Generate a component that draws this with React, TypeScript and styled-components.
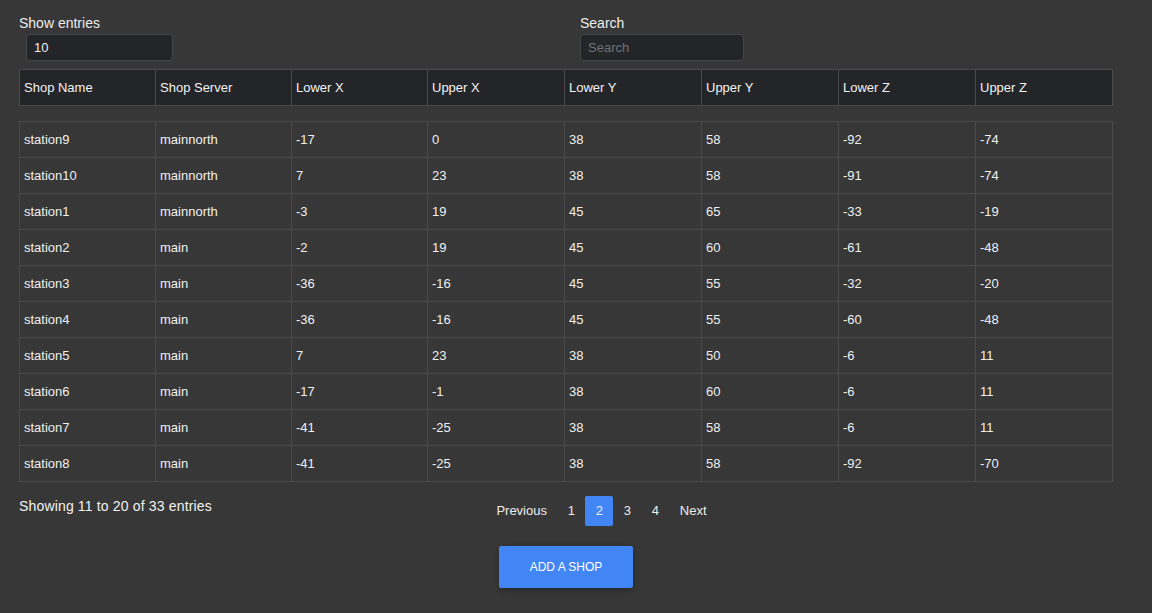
import React from "react";
import styled, { createGlobalStyle } from "styled-components";

const GlobalStyle = createGlobalStyle`
  html, body {
    margin: 0;
    padding: 0;
    background: #373737;
    min-height: 100%;
  }
  body {
    font-family: "Liberation Sans", Arial, sans-serif;
    color: #ececec;
  }
`;

const Page = styled.div`
  width: 1094px;
  padding: 15px 0 0 19px;
  min-height: 598px;
`;

const Controls = styled.div`
  display: flex;
  align-items: flex-start;
`;

const Field = styled.div<{ $width: number; $indent?: number }>`
  width: ${(p) => p.$width}px;
  display: flex;
  flex-direction: column;
  align-items: flex-start;

  input {
    margin-left: ${(p) => p.$indent ?? 0}px;
  }
`;

const Label = styled.label`
  font-size: 14px;
  line-height: 16px;
  color: #ececec;
`;

const TextInput = styled.input<{ $width: number }>`
  box-sizing: border-box;
  width: ${(p) => p.$width}px;
  height: 27px;
  margin-top: 3px;
  padding: 0 7px;
  background: #242528;
  border: 1px solid #444548;
  border-radius: 4px;
  color: #f0f0f0;
  font-family: "Liberation Sans", Arial, sans-serif;
  font-size: 13px;
  outline: none;

  &::placeholder {
    color: #6f7277;
  }
`;

const Grid = styled.table<{ $gap?: number }>`
  width: 1094px;
  table-layout: fixed;
  border-collapse: separate;
  border-spacing: 0;
  border-top: 1px solid #4a4a4a;
  border-left: 1px solid #4a4a4a;
  margin-top: ${(p) => p.$gap ?? 0}px;
`;

const HeadCell = styled.th`
  height: 36px;
  padding: 0 4px;
  box-sizing: border-box;
  text-align: left;
  font-weight: normal;
  font-size: 13px;
  color: #f2f2f2;
  background: #242528;
  border-right: 1px solid #4a4a4a;
  border-bottom: 1px solid #4a4a4a;
  vertical-align: middle;
`;

const Cell = styled.td`
  height: 36px;
  padding: 0 4px;
  box-sizing: border-box;
  font-size: 13px;
  color: #f0f0f0;
  border-right: 1px solid #4a4a4a;
  border-bottom: 1px solid #4a4a4a;
  vertical-align: middle;
  white-space: nowrap;
`;

const Footer = styled.div`
  display: flex;
  align-items: flex-start;
  padding-top: 14px;
`;

const Info = styled.div`
  width: 467px;
  padding-top: 2px;
  font-size: 14px;
  line-height: 16px;
  letter-spacing: 0.16px;
  color: #f2f2f2;
`;

const Pager = styled.nav`
  display: flex;
`;

const PageLink = styled.span<{ $active?: boolean }>`
  height: 30px;
  line-height: 30px;
  padding: 0 10.4px;
  font-size: 13px;
  color: #ececec;
  border-radius: 2px;
  background: ${(p) => (p.$active ? "#4285f4" : "transparent")};
  cursor: pointer;
`;

const Actions = styled.div`
  display: flex;
  justify-content: center;
  padding-top: 20px;
`;

const AddButton = styled.button`
  width: 134px;
  height: 42px;
  padding: 0;
  border: none;
  border-radius: 2px;
  background: #4285f4;
  color: #ffffff;
  font-family: "Liberation Sans", Arial, sans-serif;
  font-size: 12px;
  text-transform: uppercase;
  box-shadow: 0 2px 5px rgba(0, 0, 0, 0.16), 0 2px 10px rgba(0, 0, 0, 0.12);
  cursor: pointer;
`;

const columns = [
  "Shop Name",
  "Shop Server",
  "Lower X",
  "Upper X",
  "Lower Y",
  "Upper Y",
  "Lower Z",
  "Upper Z",
];

const columnWidths = [136, 136, 136, 137, 137, 137, 137, 137];

const rows: (string | number)[][] = [
  ["station9", "mainnorth", -17, 0, 38, 58, -92, -74],
  ["station10", "mainnorth", 7, 23, 38, 58, -91, -74],
  ["station1", "mainnorth", -3, 19, 45, 65, -33, -19],
  ["station2", "main", -2, 19, 45, 60, -61, -48],
  ["station3", "main", -36, -16, 45, 55, -32, -20],
  ["station4", "main", -36, -16, 45, 55, -60, -48],
  ["station5", "main", 7, 23, 38, 50, -6, 11],
  ["station6", "main", -17, -1, 38, 60, -6, 11],
  ["station7", "main", -41, -25, 38, 58, -6, 11],
  ["station8", "main", -41, -25, 38, 58, -92, -70],
];

const Cols = () => (
  <colgroup>
    {columnWidths.map((w, i) => (
      <col key={i} style={{ width: w }} />
    ))}
  </colgroup>
);

export default function App() {
  return (
    <>
      <GlobalStyle />
      <Page>
        <Controls>
          <Field $width={561} $indent={7}>
            <Label>Show entries</Label>
            <TextInput $width={147} defaultValue="10" />
          </Field>
          <Field $width={170}>
            <Label>Search</Label>
            <TextInput $width={164} placeholder="Search" />
          </Field>
        </Controls>

        <Grid $gap={8}>
          <Cols />
          <thead>
            <tr>
              {columns.map((c) => (
                <HeadCell key={c}>{c}</HeadCell>
              ))}
            </tr>
          </thead>
        </Grid>

        <Grid $gap={15}>
          <Cols />
          <tbody>
            {rows.map((r) => (
              <tr key={r[0] as string}>
                {r.map((v, i) => (
                  <Cell key={i}>{v}</Cell>
                ))}
              </tr>
            ))}
          </tbody>
        </Grid>

        <Footer>
          <Info>Showing 11 to 20 of 33 entries</Info>
          <Pager>
            <PageLink>Previous</PageLink>
            <PageLink>1</PageLink>
            <PageLink $active>2</PageLink>
            <PageLink>3</PageLink>
            <PageLink>4</PageLink>
            <PageLink>Next</PageLink>
          </Pager>
        </Footer>

        <Actions>
          <AddButton>Add a shop</AddButton>
        </Actions>
      </Page>
    </>
  );
}
